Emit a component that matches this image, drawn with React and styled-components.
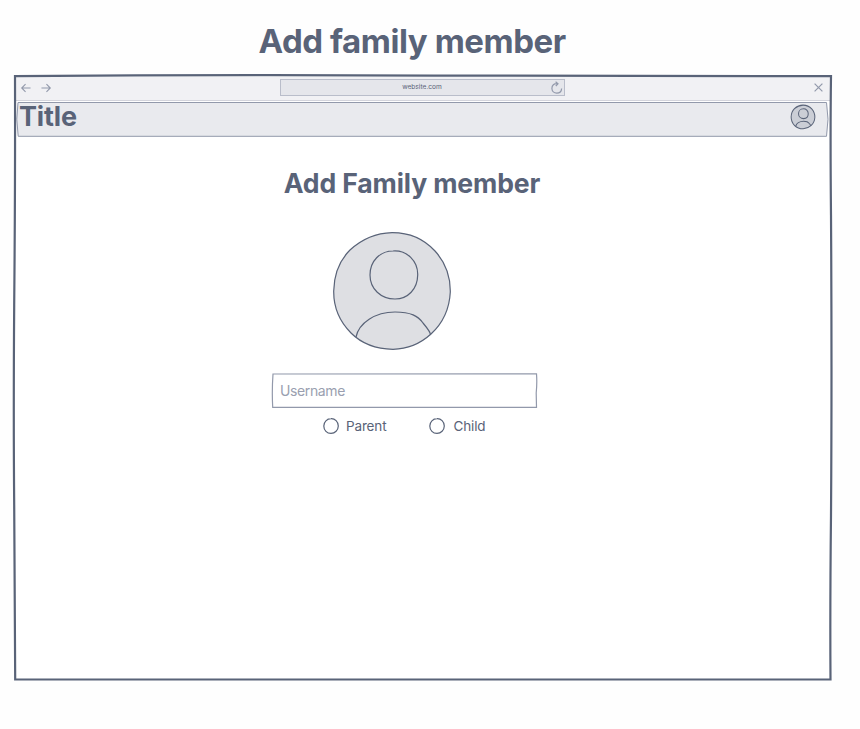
import React from "react";
import styled, { createGlobalStyle } from "styled-components";

const ink = "#596378";
const soft = "#9299ab";

const GlobalStyle = createGlobalStyle`
  * { box-sizing: border-box; }
  body {
    margin: 0;
    background: #fefefe;
    color: ${ink};
    font-family: Inter, "Liberation Sans", sans-serif;
  }
`;

const Page = styled.main`
  width: 860px;
  height: 729px;
  padding: 20px 28px 0 14px;
  overflow: hidden;
`;

const Heading = styled.h1`
  margin: 0 0 0 ${(p) => p.$indent}px;
  font-size: ${(p) => p.$size}px;
  line-height: ${(p) => p.$line}px;
  letter-spacing: ${(p) => p.$track}px;
  font-weight: ${(p) => p.$weight || 600};
  white-space: nowrap;
`;

const Browser = styled.section`
  position: relative;
  width: 818px;
  height: 605px;
  margin-top: 12px;
  padding: 2px;
  background: #fff;
`;

const Outline = styled.svg`
  position: absolute;
  inset: 0;
  width: 100%;
  height: 100%;
  overflow: visible;
  pointer-events: none;
  fill: ${(p) => p.$fill || "none"};
  stroke: ${(p) => p.$stroke};
  stroke-width: ${(p) => p.$width};
`;

const Toolbar = styled.div`
  display: grid;
  grid-template-columns: 264px 285px 1fr;
  align-items: center;
  height: 24px;
  padding-bottom: 2px;
  background: #f1f1f4;
  border-bottom: 1px solid #d3d4dc;
`;

const NavButtons = styled.div`
  display: flex;
  gap: 10px;
  padding-left: 5px;
`;

const AddressBar = styled.div`
  display: grid;
  grid-template-columns: 15px 1fr 13px;
  align-items: center;
  height: 17px;
  background: #e5e6eb;
  border: 1px solid #b9bdca;
`;

const Address = styled.span`
  grid-column: 2;
  text-align: center;
  font-size: 6.6px;
  line-height: 15px;
  padding-right: 3px;
`;

const CloseButton = styled.div`
  display: flex;
  justify-content: flex-end;
  padding-right: 7px;
`;

const Icon = styled.svg`
  display: block;
  flex: none;
  width: ${(p) => p.$w}px;
  height: ${(p) => p.$h || p.$w}px;
  fill: none;
  stroke: ${(p) => p.$color || soft};
  stroke-width: ${(p) => p.$stroke || 1.2};
  overflow: visible;
`;

const TitleBar = styled.header`
  position: relative;
  display: flex;
  align-items: center;
  justify-content: space-between;
  height: 34px;
  margin: 1px 2px 0 1px;
  padding: 0 13px 0 2px;
`;

const Title = styled.div`
  position: relative;
  padding-bottom: 4px;
  font-size: 27px;
  font-weight: 700;
  line-height: 30px;
  letter-spacing: -0.15px;
`;

const TitleAvatar = styled.div`
  position: relative;
  padding-bottom: 5px;
`;

const Content = styled.div`
  padding-top: 31px;
`;

const AvatarRow = styled.div`
  padding: 33px 0 0 317px;
`;

const Field = styled.label`
  position: relative;
  display: flex;
  align-items: center;
  width: 265px;
  height: 34px;
  margin: 23px 0 0 256px;
  padding-left: 8px;
`;

const Placeholder = styled.span`
  position: relative;
  font-size: 14px;
  letter-spacing: -0.38px;
  color: #9a9fb0;
`;

const Choices = styled.div`
  display: flex;
  gap: 42.6px;
  margin: 10px 0 0 307px;
`;

const Choice = styled.div`
  display: flex;
  align-items: center;
  gap: ${(p) => p.$gap}px;
  height: 18px;
  font-size: 13.5px;
  letter-spacing: -0.15px;
`;

const Radio = () => (
  <Icon $w={16} $color={ink} viewBox="0 0 16 16">
    <path d="M8 .7C12 .5 15.2 3.8 15.3 8C15.2 12.3 12 15.3 8 15.4C4 15.3 .8 12.4 .8 8C.8 3.9 4 .7 8 .7Z" />
  </Icon>
);

const Avatar = ({ size, fill, line }) => (
  <Icon $w={size} $color={ink} $stroke={line} viewBox="0 0 118 118">
    <path
      fill={fill}
      d="M59 .6C77 .5 91 7 102 19C113 31 117.5 44 117.3 60C116.5 76 110 91 98 102C87 112 75 117 60 117.3C43 117 29 112 18 101C6 89 .5 75 .7 59C1 43 6 29 17 18C29 7 43 1 59 .6Z"
    />
    <path d="M60 19C74 18 85 29 84.7 43C84.5 57 75 67 62 67C48 67 37 57 37 43C37 29 47 19 60 19Z" />
    <path d="M23 105C26 91 42 80 62 80C78 80 85 84 90 91C95 97 98 101 97.500 103" />
  </Icon>
);

export default function App() {
  return (
    <>
      <GlobalStyle />
      <Page>
        <Heading $indent={244.5} $size={33} $line={43} $track={-0.44} $weight={700}>
          Add family member
        </Heading>
        <Browser>
          <Toolbar>
            <NavButtons>
              <Icon $w={10} viewBox="0 0 11 11">
                <path d="M10.500 5.500H1M5 1.300L.8 5.500L5 9.700" />
              </Icon>
              <Icon $w={10} viewBox="0 0 11 11">
                <path d="M.5 5.500H10M6 1.300L10.200 5.500L6 9.700" />
              </Icon>
            </NavButtons>
            <AddressBar>
              <Address>website.com</Address>
              <Icon $w={12} viewBox="0 0 12 12">
                <path d="M6.500 1.700C3 1.200 .8 3.500 .9 6.500C1 9.300 3.200 11.200 5.700 11.200C8.500 11.200 10.500 9.200 10.600 6.500M4.600 -.3L7 1.800L4.800 4" />
              </Icon>
            </AddressBar>
            <CloseButton>
              <Icon $w={9} viewBox="0 0 9 9">
                <path d="M.6 .6L8.400 8.400M8.400 .6L.6 8.400" />
              </Icon>
            </CloseButton>
          </Toolbar>
          <TitleBar>
            <Outline $fill="#e9eaee" $stroke={soft} $width={1} viewBox="0 0 811 34">
              <path d="M1 .5H809.500Q812.500 17 809.500 34.300H1.200Q-1.500 17 1 .5Z" />
            </Outline>
            <Title>Title</Title>
            <TitleAvatar>
              <Avatar size={24} fill="#cbced6" line={5} />
            </TitleAvatar>
          </TitleBar>
          <Content>
            <Heading as="h2" $indent={267.7} $size={26.6} $line={32} $track={-0.13} $weight={650}>
              Add Family member
            </Heading>
            <AvatarRow>
              <Avatar size={118} fill="#dedfe3" line={1.2} />
            </AvatarRow>
            <Field>
              <Outline $stroke={soft} $width={1.2} viewBox="0 0 265 34">
                <path d="M1 1L264.500 .9Q265.200 10 264.200 20L264.500 34.300H.7Q-.2 18 1 1Z" />
              </Outline>
              <Placeholder>Username</Placeholder>
            </Field>
            <Choices>
              <Choice $gap={7}>
                <Radio />
                Parent
              </Choice>
              <Choice $gap={8.5}>
                <Radio />
                Child
              </Choice>
            </Choices>
          </Content>
          <Outline $stroke={ink} $width={2.2} viewBox="0 0 818 605">
            <path d="M1 1.200Q210 -.5 420 .6T817 1.200Q816.200 60 817 140Q818 300 817 440Q816 530 816.500 604.500H1.200Q.8 520 .2 430Q-.6 340 .2 230Q1.300 110 1 1.200Z" />
          </Outline>
        </Browser>
      </Page>
    </>
  );
}
